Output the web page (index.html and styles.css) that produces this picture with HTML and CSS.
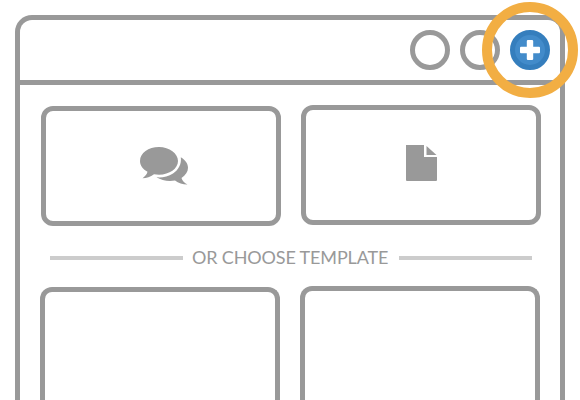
FILE: index.html
```html
<!DOCTYPE html>
<html lang="en">
<head>
<meta charset="utf-8">
<title>Choose template</title>
<link rel="stylesheet" href="styles.css">
</head>
<body>
<main class="window">
  <header class="toolbar">
    <span class="button"></span>
    <span class="button"></span>
    <span class="button add">
      <svg width="20" height="20" viewBox="0 0 20 20"><path fill="#fff" d="M8 0h4q1.200 0 1.200 1v5.800h5.800q1 0 1 1.200v4q0 1.200-1 1.200h-5.800v5.800q0 1-1.200 1H8q-1.200 0-1.200-1v-5.800H1q-1 0-1-1.200V8q0-1.200 1-1.200h5.800V1q0-1 1.200-1z"/></svg>
      <span class="highlight"></span>
    </span>
  </header>
  <div class="cards">
    <section class="card lower">
      <svg class="chat" width="50" height="40" viewBox="0 0 50 40">
        <path d="M19 1C8.500 1 0 7 0 15c0 4.500 3 8.300 7.500 10.800C6.800 28.500 5 30.500 2.500 32.200c4 0 8-1.500 11.500-4 1.600.3 3.300.5 5 .5C29.500 28.700 38 22.500 38 15S29.500 1 19 1z"/>
        <path d="M40.800 11.200C45.300 14 48 17.500 48 21.700c0 4-2.400 7.600-6.500 10.200.8 2.700 2.900 4.800 6 6.600-5 0-9-1.500-12.500-4-7 1.200-13.500-.2-18.500-3.200 5 .6 11.500-.4 16.500-3.800 5.500-3.700 8.700-9.500 7.800-16.300z"/>
      </svg>
    </section>
    <section class="card">
      <svg class="file" width="31" height="36" viewBox="0 0 31 36">
        <path d="M0 0h18v12h13v23q0 1-1 1H1q-1 0-1-1z"/>
        <path d="M20.500 1l10 9h-10z"/>
      </svg>
    </section>
  </div>
  <div class="divider"><span class="label">OR CHOOSE TEMPLATE</span></div>
  <div class="cards templates">
    <section class="card lower"></section>
    <section class="card"></section>
  </div>
</main>
</body>
</html>
```
FILE: styles.css
```css
* { box-sizing: border-box; }
body {
  margin: 0;
  padding: 15px 0 0 15px;
  height: 400px;
  overflow: hidden;
  background: #fff;
  font-family: Lato, sans-serif;
}
.window {
  width: 550px;
  height: 385px;
  border: 5px solid #999;
  border-bottom: 0;
  border-radius: 17px 17px 0 0;
}
.toolbar {
  display: flex;
  justify-content: flex-end;
  gap: 10px;
  height: 65px;
  padding: 10px 10px 0 0;
  border-bottom: 5px solid #999;
}
.button {
  width: 40px;
  height: 40px;
  border: 5px solid #999;
  border-radius: 50%;
}
.add {
  position: relative;
  display: flex;
  align-items: center;
  justify-content: center;
  border-color: #357ebd;
  background: #428bca;
}
.highlight {
  position: absolute;
  top: -33px;
  left: -33px;
  width: 96px;
  height: 96px;
  border: 10px solid #f2ae43;
  border-radius: 50%;
}
.cards {
  display: flex;
  gap: 20px;
  padding: 20px 0 0 21px;
}
.card {
  display: flex;
  align-items: center;
  justify-content: center;
  width: 240px;
  height: 120px;
  border: 5px solid #999;
  border-radius: 12px;
}
.card svg { fill: #999; }
.chat { margin-left: 8px; }
.file { margin: 0 0 4px 1px; }
.lower { margin-top: 1px; }
.divider {
  display: flex;
  align-items: center;
  gap: 9px;
  width: 482px;
  height: 20px;
  margin: 22px 0 0 30px;
}
.divider::before,
.divider::after {
  content: "";
  flex: 1;
  height: 4px;
  background: #ccc;
}
.label {
  width: 198px;
  padding-bottom: 2px;
  color: #999;
  font-size: 18px;
  line-height: 18px;
  letter-spacing: -0.15px;
  white-space: nowrap;
}
.templates {
  height: 132px;
  padding: 18px 0 0 20px;
  overflow: hidden;
}
.templates .card {
  height: 114px;
  border-bottom: 0;
  border-radius: 12px 12px 0 0;
}
.templates .lower { height: 113px; }
```
